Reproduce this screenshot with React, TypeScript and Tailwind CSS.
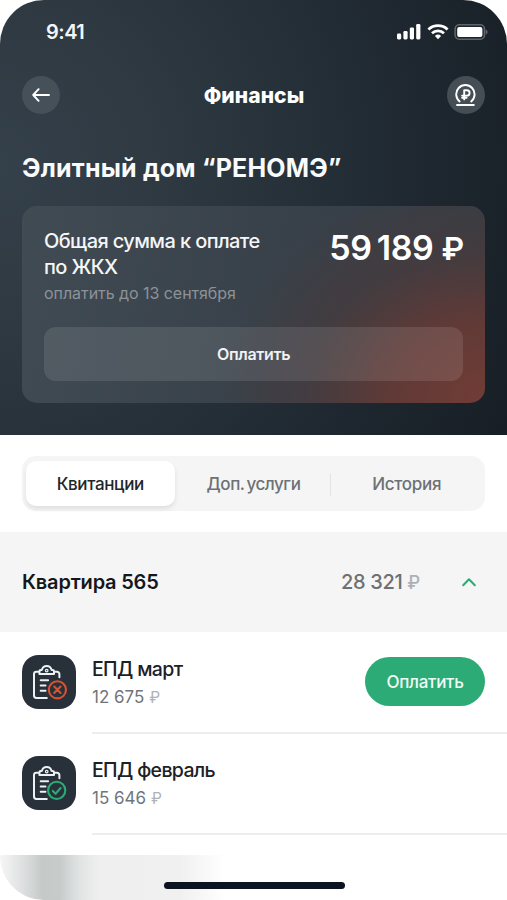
import React, { useState } from "react";

type Receipt = {
  title: string;
  amount: string;
  paid: boolean;
};

const receipts: Receipt[] = [
  { title: "ЕПД март", amount: "12 675", paid: false },
  { title: "ЕПД февраль", amount: "15 646", paid: true },
];

const StatusBar = () => (
  <div className="flex h-[62px] items-center justify-between pt-px pr-[19px] pl-[46px]">
    <span className="text-[20px] leading-6 font-semibold tracking-[-0.5px] text-[#f3f5fb]">9:41</span>
    <div className="flex items-center">
      <svg width="24" height="16" viewBox="0 0 24 16" fill="#fff">
        <rect x="0" y="9.6" width="4.2" height="5.8" rx="1.3" />
        <rect x="6.4" y="7" width="4.2" height="8.4" rx="1.3" />
        <rect x="12.8" y="3.400" width="4.2" height="12" rx="1.3" />
        <rect x="19.2" y="0" width="4.2" height="15.4" rx="1.3" />
      </svg>
      <svg className="ml-[6px]" width="22" height="16" viewBox="0 0 22 16" fill="none" stroke="#fff" strokeWidth="2.8">
        <path d="M1.4 5.4a14 14 0 0 1 19.2 0" />
        <path d="M5 9.2a8.7 8.7 0 0 1 12 0" />
        <path d="M11 15.2l-3.1-3.3a4.6 4.6 0 0 1 6.2 0z" fill="#fff" stroke="none" />
      </svg>
      <svg className="ml-[5px]" width="34" height="16" viewBox="0 0 34 16">
        <rect x="1.1" y="0.8" width="29.4" height="14.4" rx="4.2" fill="#1d242c" stroke="#5d646b" strokeWidth="1.6" />
        <rect x="3.2" y="2.9" width="25.2" height="10.2" rx="2" fill="#fff" />
        <path d="M31.7 5.4c2.6 1.2 2.6 4 0 5.2z" fill="#5d646b" />
      </svg>
    </div>
  </div>
);

const ReceiptIcon = ({ paid }: { paid: boolean }) => (
  <svg className="shrink-0" width="54" height="54" viewBox="0 0 54 54" fill="none" strokeLinecap="round" strokeLinejoin="round">
    <rect width="54" height="54" rx="16.5" fill="#28313a" />
    <g stroke="#eef1f4" strokeWidth="2">
      <path d="M24.8 43H14.4a2.4 2.4 0 0 1-2.4-2.4V19.2a2.4 2.4 0 0 1 2.4-2.4h3" />
      <path d="M32 16.800h3a2.400 2.400 0 0 1 2.400 2.400v3" />
      <path d="M17.400 18.900v-2.600c0-.9.5-1.400 1.400-1.400h1.100a4.900 4.900 0 0 1 9.600 0h1.100c.9 0 1.400.5 1.400 1.400v2.600z" />
      <circle cx="24.700" cy="15.600" r="1.300" strokeWidth="1.200" />
      <path d="M18.700 25.200h7.400M18.700 30.500h4.800M18.700 35.800h4.800" />
    </g>
    {paid ? (
      <g stroke="#2aab73" strokeWidth="2.100">
        <circle cx="34.700" cy="34.400" r="8.600" />
        <path d="M30.800 34.900l2.800 2.900 5-5.800" />
      </g>
    ) : (
      <g stroke="#d9512f" strokeWidth="2.100">
        <circle cx="35.400" cy="34.800" r="8.600" />
        <path d="M32.200 31.600l6.400 6.400M38.600 31.600l-6.400 6.400" />
      </g>
    )}
  </svg>
);

const Header = () => (
  <header className="h-[435px] shrink-0 bg-[radial-gradient(circle_at_0%_38%,#34404a_0%,#2f3942_28%,#242e36_58%,#1b232b_85%,#171e26_100%)]">
    <StatusBar />
    <div className="mt-[14px] flex items-center justify-between px-[22px]">
      <button className="flex size-[38px] items-center justify-center rounded-full bg-[#465058]">
        <svg width="18" height="14" viewBox="0 0 18 14" fill="none" stroke="#fff" strokeWidth="1.900" strokeLinecap="round" strokeLinejoin="round">
          <path d="M17 7H1.200M6.600 1.200L1.200 7l5.400 5.800" />
        </svg>
      </button>
      <h1 className="pt-[2px] pl-px text-[21px] leading-6 font-extrabold tracking-[0.1px] text-white">Финансы</h1>
      <button className="flex size-[38px] items-center justify-center rounded-full bg-[#454d55]">
        <svg width="22" height="23" viewBox="0 0 22 23" fill="none" stroke="#fff" strokeWidth="1.900" strokeLinecap="round" strokeLinejoin="round">
          <path d="M4.600 17.400a9.200 9.200 0 1 1 11.600 0" />
          <path d="M2 21h16.800" />
          <path d="M9.200 15.400V6.200h2.700a2.700 2.700 0 0 1 0 5.400H7.100M7.100 13.800h4.500" />
        </svg>
      </button>
    </div>
    <h2 className="mt-[38px] pl-[22px] text-[25px] leading-8 font-bold tracking-[0.2px] whitespace-nowrap text-[#f8fafc]">
      Элитный дом “РЕНОМЭ”
    </h2>
    <section className="mx-[22px] mt-[22px] h-[197px] rounded-[15px] bg-[radial-gradient(ellipse_58%_115%_at_100%_98%,#713c35_0%,#603a37_35%,#4b3a3b99_65%,#3a3d4200_100%),linear-gradient(100deg,#414b53_0%,#38414a_55%,#353c43_100%)] px-[22px] pt-[21px]">
      <div className="flex items-start justify-between">
        <div className="whitespace-nowrap">
          <p className="pt-px text-[20px] leading-[26px] font-medium tracking-[-0.6px] text-[#f4f6f8]">
            Общая сумма к оплате
            <br />
            по ЖКХ
          </p>
          <p className="mt-px text-[16px] leading-6 tracking-[-0.05px] text-[#8c9299]">оплатить до 13 сентября</p>
        </div>
        <span className="text-[34px] leading-[42px] font-semibold tracking-[-0.4px] [word-spacing:-3px] whitespace-nowrap text-white">
          59 189<span className="ml-[8px] text-[31px] tracking-[-1px]">₽</span>
        </span>
      </div>
      <button className="mt-[22px] flex h-[54px] w-full items-center justify-center rounded-[12px] bg-white/10 text-[16px] font-semibold tracking-[-0.35px] text-[#f0f2f4]">
        Оплатить
      </button>
    </section>
  </header>
);

const tabs = ["Квитанции", "Доп. услуги", "История"];

const App = () => {
  const [activeTab, setActiveTab] = useState(0);

  return (
    <div className="h-[900px] w-[507px] bg-white font-['Inter',sans-serif]">
      <div className="flex h-full flex-col overflow-hidden rounded-tl-[44px] rounded-tr-[44px] rounded-bl-[44px] bg-white">
        <Header />

        {/* Tabs */}
        <nav className="mx-[22px] mt-[21px] flex h-[55px] rounded-[14px] bg-[#f5f5f5] p-[5px] pl-[4px]">
          {tabs.map((tab, index) => (
            <button
              key={tab}
              onClick={() => setActiveTab(index)}
              className={`flex items-center justify-center pt-[3px] text-[17px] font-medium [word-spacing:-2px] ${
                index === 0 ? "w-[149px] tracking-[-0.35px]" : index === 1 ? "w-[156px] pl-[2px] tracking-[-0.45px]" : "w-[150px] pl-[3px] tracking-[-0.3px]"
              } ${index === 2 ? "relative before:absolute before:left-0 before:h-[22px] before:w-px before:bg-[#e3e3e3]" : ""} ${
                activeTab === index
                  ? "rounded-[10px] bg-white text-[#20252a] shadow-[0_3px_5px_rgba(0,0,0,0.09)]"
                  : "text-[#6c7175]"
              }`}
            >
              {tab}
            </button>
          ))}
        </nav>

        {/* Apartment summary */}
        <div className="mt-[21px] flex h-[100px] shrink-0 items-center bg-[#f5f5f5] px-[22px]">
          <h3 className="grow text-[20px] font-semibold tracking-[-0.2px] text-[#14181c]">Квартира 565</h3>
          <span className="text-[20px] font-medium tracking-[-0.2px] [word-spacing:-0.5px] text-[#6c7175]">
            28 321 <span className="text-[18px] text-[#aeb1b4]">₽</span>
          </span>
          <svg className="mr-[9px] ml-[42px]" width="14" height="9" viewBox="0 0 14 9" fill="none" stroke="#2cab74" strokeWidth="2" strokeLinecap="round" strokeLinejoin="round">
            <path d="M1.200 7.200L7 1.200l5.800 6" />
          </svg>
        </div>

        {/* Receipts */}
        {receipts.map((receipt) => (
          <div key={receipt.title} className="flex h-[101px] shrink-0 gap-[16px] pl-[22px]">
            <div className="pt-[23px]">
              <ReceiptIcon paid={receipt.paid} />
            </div>
            <div className="flex h-[102px] grow justify-between border-b-2 border-[#ededed] pr-[22px]">
              <div className="pt-[24px]">
                <p className="text-[19.5px] leading-[26px] font-medium tracking-[-0.65px] text-[#1c2126]">{receipt.title}</p>
                <p className="mt-[3px] text-[17px] leading-6 text-[#6f757a]">
                  {receipt.amount} <span className="text-[15.5px] text-[#b0b3b6]">₽</span>
                </p>
              </div>
              {!receipt.paid && (
                <button className="mt-[25px] h-[49px] w-[120px] rounded-full bg-[#2dab76] pt-[3px] text-[17px] font-medium tracking-[-0.3px] text-[#effbf5]">
                  Оплатить
                </button>
              )}
            </div>
          </div>
        ))}

        {/* Home indicator */}
        <div className="mt-auto flex h-[45px] justify-center bg-[linear-gradient(90deg,#f6f6f6_0px,#dfe1e1_22px,#c5cac9_42px,#c7cccb_60px,#e2e4e4_80px,#efefef_100px,#f0f0f0_180px,#ffffff_225px)] pt-[27px] pl-[2px]">
          <div className="h-[7px] w-[181px] rounded-full bg-[#0b1420]" />
        </div>
      </div>
    </div>
  );
};

export default App;
